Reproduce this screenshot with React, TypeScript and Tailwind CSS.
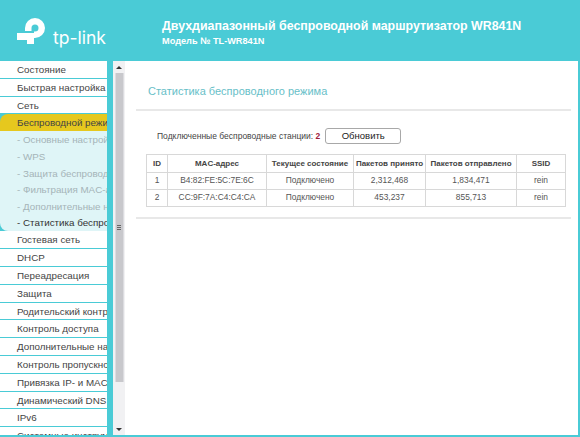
const MENU_TOP = ['Состояние', 'Быстрая настройка', 'Сеть'];
const SUBMENU = ['- Основные настройки', '- WPS', '- Защита беспроводного режима', '- Фильтрация MAC-адресов', '- Дополнительные настройки', '- Статистика беспроводного режима'];
const MENU_BOTTOM = [
  'Гостевая сеть',
  'DHCP',
  'Переадресация',
  'Защита',
  'Родительский контроль',
  'Контроль доступа',
  'Дополнительные настройки',
  'Контроль пропускной способности',
  'Привязка IP- и MAC-адресов',
  'Динамический DNS',
  'IPv6',
  'Системные инструменты',
];

const STATIONS = [
  { id: 1, mac: 'B4:82:FE:5C:7E:6C', state: 'Подключено', rx: '2,312,468', tx: '1,834,471', ssid: 'rein' },
  { id: 2, mac: 'CC:9F:7A:C4:C4:CA', state: 'Подключено', rx: '453,237', tx: '855,713', ssid: 'rein' },
];

function Logo() {
  return (
    <svg width="28" height="26" viewBox="0 0 28 26" className="shrink-0">
      <path d="M11.25 13V10A6.75 6.75 0 1 1 18 16.75H17" fill="none" stroke="#ffffff" strokeWidth="6.5" />
      <path d="M0 15H17V26H10V22H0Z" fill="#ffffff" />
    </svg>
  );
}

function MenuItem({ label }: { label: string }) {
  return (
    <div className="h-[17.8px] shrink-0 bg-white border-b border-[#4acbd6] pl-[17px] leading-[17px] text-[#444444] whitespace-nowrap overflow-hidden">
      {label}
    </div>
  );
}

export default function App() {
  return (
    <div className="w-[580px] h-[437px] overflow-hidden bg-[#4acbd6] flex flex-col font-['Liberation_Sans',Arial,sans-serif]">
      <header className="h-[61px] shrink-0 flex items-start pl-[17px] pt-[18px]">
        <div className="flex items-start gap-[8px] w-[145px]">
          <Logo />
          <span className="text-[17.5px] leading-[22px] mt-[9px] font-normal text-white font-['Inter',sans-serif]">tp-link</span>
        </div>
        <div className="text-white font-bold">
          <div className="text-[12.4px] leading-[16px]">Двухдиапазонный беспроводной маршрутизатор WR841N</div>
          <div className="text-[9.2px] leading-[14px]">Модель № TL-WR841N</div>
        </div>
      </header>

      <div className="flex-1 flex min-h-0 mb-[2px]">
        <nav className="w-[107px] shrink-0 flex flex-col overflow-hidden text-[9.8px]">
          {MENU_TOP.map(m => <MenuItem key={m} label={m} />)}
          <div className="h-[17px] shrink-0 bg-[#e6c81e] rounded-tl-[8px] pl-[17px] leading-[17px] text-[#444444] whitespace-nowrap overflow-hidden">
            Беспроводной режим
          </div>
          <div className="h-[100px] shrink-0 bg-[#dff5f7] rounded-bl-[8px] pl-[17px] overflow-hidden">
            {SUBMENU.map((s, i) => (
              <div key={s} className={`h-[16.6px] leading-[17px] whitespace-nowrap ${i === 5 ? 'text-[#333333]' : 'text-[#a5b4b8]'}`}>
                {s}
              </div>
            ))}
          </div>
          {MENU_BOTTOM.map(m => <MenuItem key={m} label={m} />)}
        </nav>

        <div className="w-[6px] shrink-0" />

        <div className="w-[12px] shrink-0 bg-[#f1f1f3] flex flex-col items-center">
          <div className="h-[12px] shrink-0 flex items-center justify-center">
            <div className="w-0 h-0 border-x-[3px] border-x-transparent border-b-[3px] border-b-[#333333]" />
          </div>
          <div className="w-[9px] h-[309px] shrink-0 bg-[#c8c8cc] border-x border-[#dcdce0] flex items-center justify-center">
            <div className="w-[4px] h-[5px] border-y border-[#666666] flex items-center">
              <div className="w-full h-px bg-[#666666]" />
            </div>
          </div>
          <div className="flex-1" />
          <div className="h-[12px] shrink-0 flex items-center justify-center">
            <div className="w-0 h-0 border-x-[3px] border-x-transparent border-t-[3px] border-t-[#333333]" />
          </div>
        </div>

        <main className="flex-1 bg-white mr-[2px] flex flex-col pl-[11px] pr-[7px] text-[#333333]">
          <h1 className="h-[50px] shrink-0 border-b-2 border-[#e8e8e8] pl-[12px] pt-[23px] text-[11px] leading-[14px] font-normal text-[#68c0c8]">
            Статистика беспроводного режима
          </h1>
          <div className="mt-[17px] h-[16px] flex items-center pl-[21px] text-[8.5px] text-[#444444]">
            <span>Подключенные беспроводные станции:&nbsp;</span>
            <span className="font-bold text-[#a01c3c]">2</span>
            <button className="ml-[5px] w-[76px] h-[16px] bg-white border border-[#a8a8a8] rounded-[3px] text-[9.5px] text-[#222222]">
              Обновить
            </button>
          </div>
          <table className="mt-[10px] ml-[10px] w-[420px] border-collapse text-center text-[8.4px] text-[#555555] table-fixed">
            <thead>
              <tr className="h-[18px] text-[8px] text-[#444444] whitespace-nowrap">
                <th className="w-[21px] border border-[#d8d8d8]">ID</th>
                <th className="w-[99px] border border-[#d8d8d8]">MAC-адрес</th>
                <th className="w-[87px] border border-[#d8d8d8]">Текущее состояние</th>
                <th className="w-[72px] border border-[#d8d8d8]">Пакетов принято</th>
                <th className="w-[91px] border border-[#d8d8d8]">Пакетов отправлено</th>
                <th className="border border-[#d8d8d8]">SSID</th>
              </tr>
            </thead>
            <tbody>
              {STATIONS.map(st => (
                <tr key={st.id} className="h-[17px]">
                  <td className="border border-[#d8d8d8] pb-[1px]">{st.id}</td>
                  <td className="border border-[#d8d8d8] pb-[1px]">{st.mac}</td>
                  <td className="border border-[#d8d8d8] pb-[1px]">{st.state}</td>
                  <td className="border border-[#d8d8d8] pb-[1px]">{st.rx}</td>
                  <td className="border border-[#d8d8d8] pb-[1px]">{st.tx}</td>
                  <td className="border border-[#d8d8d8] pb-[1px]">{st.ssid}</td>
                </tr>
              ))}
            </tbody>
          </table>
          <div className="mt-[10px] h-[2px] bg-[#e8e8e8]" />
        </main>
      </div>
    </div>
  );
}
